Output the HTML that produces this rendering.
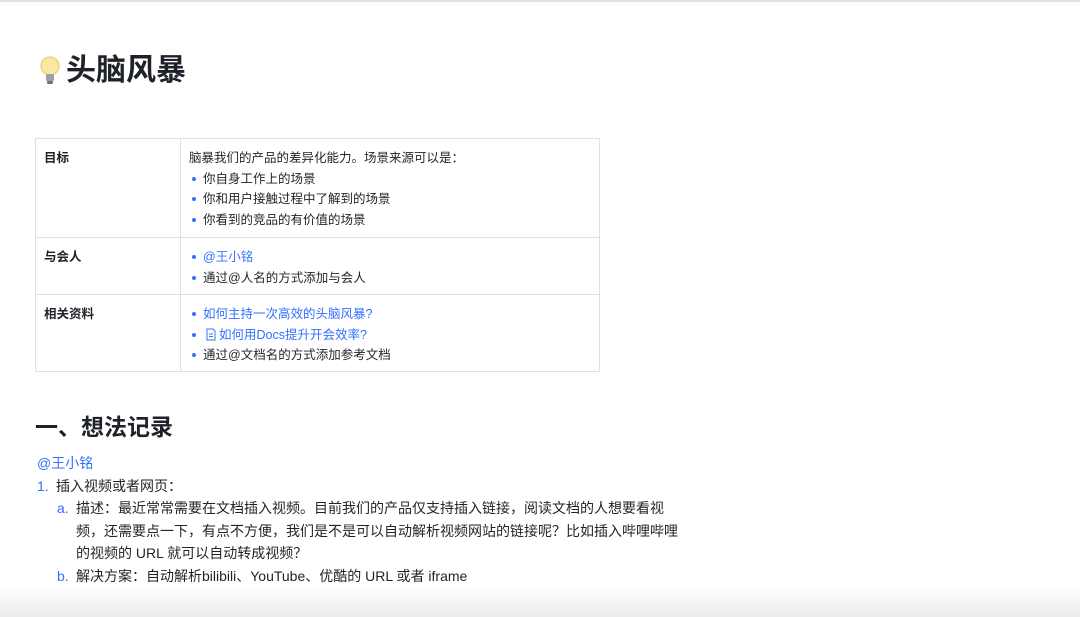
<!DOCTYPE html>
<html><head><meta charset="utf-8"><style>
*{margin:0;padding:0;box-sizing:border-box}
body{width:1080px;height:617px;overflow:hidden;background:#fff;font-family:"Liberation Sans","Noto Sans CJK SC",sans-serif;color:#1f2329;position:relative}
.top{position:absolute;left:0;top:0;width:1080px;height:2px;background:#e3e3e3}
h1{position:absolute;left:37px;top:53px;font-size:30px;font-weight:bold;line-height:36px;display:flex;align-items:center}
.tbl{position:absolute;left:35px;top:138px;width:565px;border:1px solid #dee0e3;font-size:12.5px}
.row{display:flex;border-top:1px solid #dee0e3}
.row:first-child{border-top:none}
.k{width:145px;border-right:1px solid #dee0e3;padding:9px 8px;font-weight:bold;line-height:20px}
.v{flex:1;padding:9px 8px;line-height:20.5px}
.b{position:relative;padding-left:14px}
.b:before{content:"";position:absolute;left:3px;top:8px;width:4px;height:4px;border-radius:50%;background:#3370ff}
.blue{color:#3370ff}
h2{position:absolute;left:35px;top:411px;font-size:23px;font-weight:bold;line-height:32px}
.body{position:absolute;left:37px;top:452px;width:652px;font-size:14px;line-height:22.6px}
.n{color:#3370ff;display:inline-block;width:19px;flex:none}
.fade{position:absolute;left:0;top:585px;width:1080px;height:32px;background:linear-gradient(#fff,#ececec)}
</style></head><body>
<div class="top"></div>
<h1><svg width="26" height="32" viewBox="0 0 26 32"><circle cx="13" cy="11" r="9" fill="#fbe9a3" stroke="#e8c65a"/><rect x="9" y="19" width="8" height="7" rx="1" fill="#9aa0a8"/><rect x="10" y="26" width="6" height="3" rx="1" fill="#6d737a"/></svg><span style="margin-left:3px">头脑风暴</span></h1>
<div class="tbl">
<div class="row" style="height:98px"><div class="k">目标</div><div class="v"><div>脑暴我们的产品的差异化能力。场景来源可以是：</div><div class="b">你自身工作上的场景</div><div class="b">你和用户接触过程中了解到的场景</div><div class="b">你看到的竞品的有价值的场景</div></div></div>
<div class="row" style="height:57px"><div class="k">与会人</div><div class="v"><div class="b blue">@王小铭</div><div class="b">通过@人名的方式添加与会人</div></div></div>
<div class="row" style="height:77px"><div class="k">相关资料</div><div class="v"><div class="b blue">如何主持一次高效的头脑风暴?</div><div class="b blue"><svg width="12" height="13" viewBox="0 0 12 13" style="vertical-align:-2px;margin:0 2px 0 2px"><path d="M2 1h6l2 2v9H2z" fill="none" stroke="#3370ff"/><path d="M4 6h4M4 8.5h4" stroke="#3370ff"/></svg>如何用Docs提升开会效率?</div><div class="b">通过@文档名的方式添加参考文档</div></div></div>
</div>
<h2>一、想法记录</h2>
<div class="body">
<div class="blue">@王小铭</div>
<div><span class="n">1.</span>插入视频或者网页：</div>
<div style="display:flex;padding-left:20px"><span class="n">a.</span><span style="width:610px">描述：最近常常需要在文档插入视频。目前我们的产品仅支持插入链接，阅读文档的人想要看视频，还需要点一下，有点不方便，我们是不是可以自动解析视频网站的链接呢？比如插入哔哩哔哩的视频的 URL 就可以自动转成视频？</span></div>
<div style="display:flex;padding-left:20px"><span class="n">b.</span><span>解决方案：自动解析bilibili、YouTube、优酷的 URL 或者 iframe</span></div>
</div>
<div class="fade"></div>
</body></html>
